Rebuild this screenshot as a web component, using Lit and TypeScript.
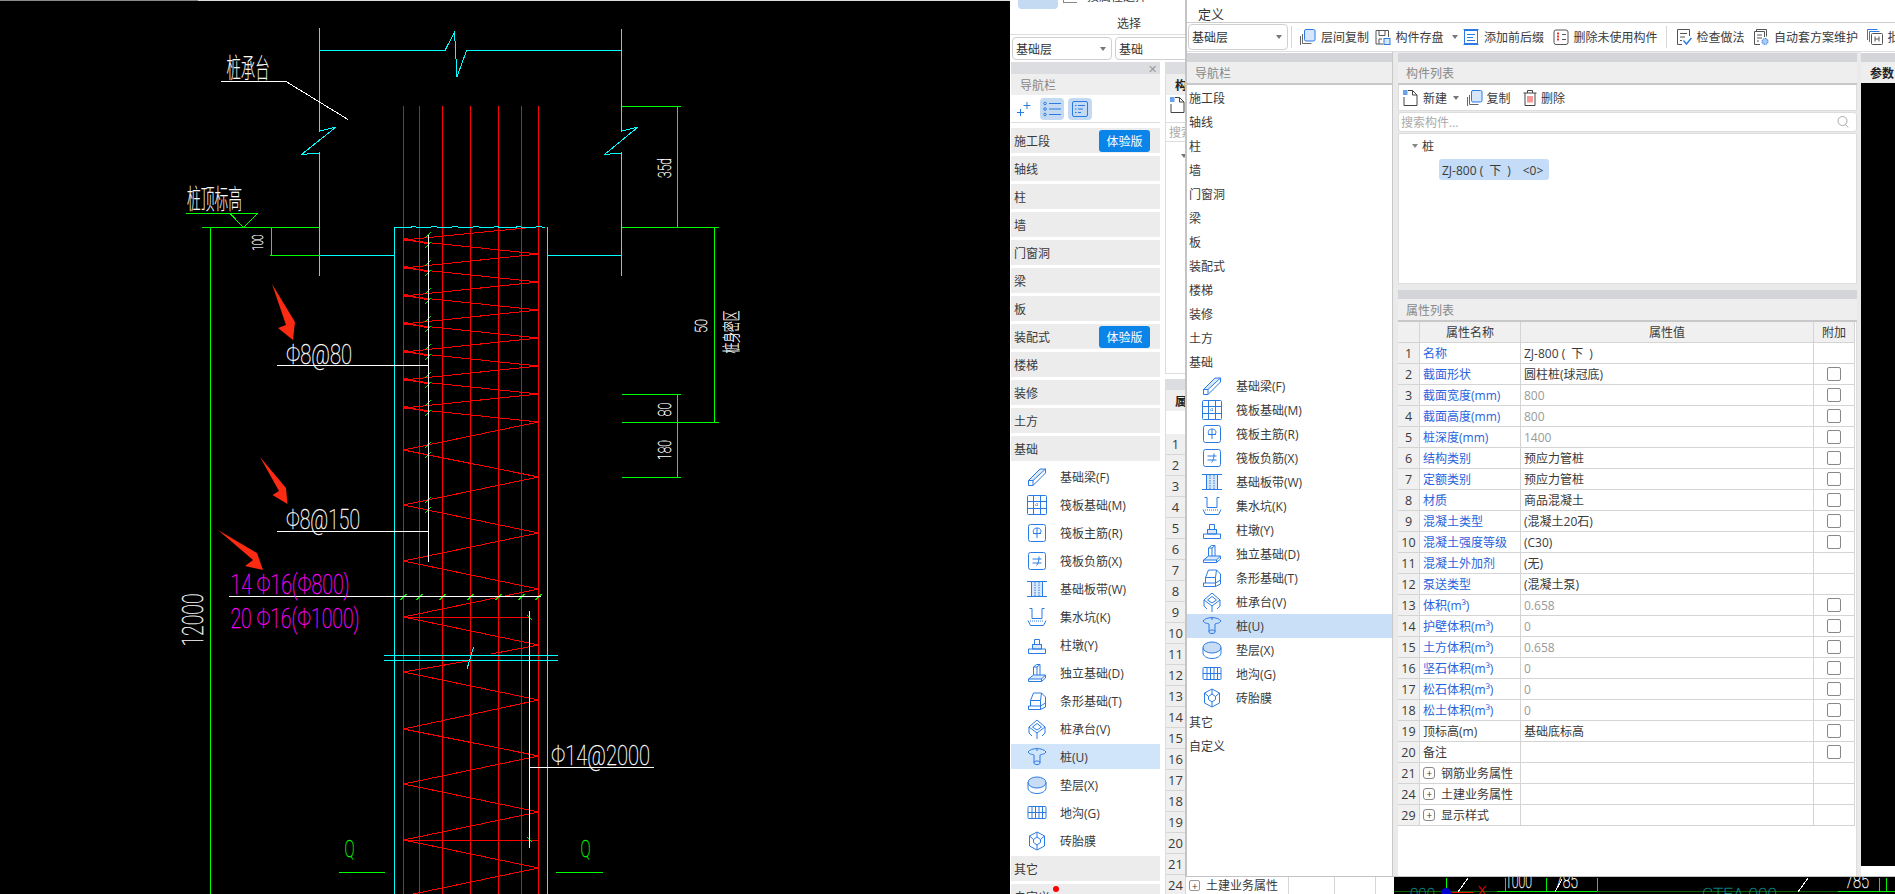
import { LitElement, css, html, svg } from 'lit';
import { customElement } from 'lit/decorators.js';

const BLUE = '#2a7be4';

const base = css`
:host {
    font: 12px "Open Sans", "Noto Sans CJK SC", sans-serif;
    color: #3a3a3a;
}

svg {
    display: block;
    flex: none;
}

.ico {
    fill: none;
    stroke: #2a7be4;
    stroke-width: 1;
}

.strip {
    flex: none;
    height: 9px;
    margin-top: 1px;
    background: #d4d5d9;
}

.head {
    flex: none;
    height: 21px;
    display: flex;
    align-items: center;
    padding-left: 9px;
    background: #eeeeee;
    color: #888;
    border-bottom: 2px solid #c8c8c8;
}

.caret {
    flex: none;
    width: 0;
    height: 0;
    border-left: 3px solid transparent;
    border-right: 3px solid transparent;
    border-top: 4px solid #777;
}

.select {
    flex: none;
    display: flex;
    align-items: center;
    justify-content: space-between;
    box-sizing: border-box;
    padding: 0 5px 0 3px;
    background: #fff;
    border: 1px solid #d0d0d0;
    border-radius: 4px;
    color: #333;
}
`;

// drawn 20x20, blue line icons for the sub rows of the navigation list
const icons: Record<string, unknown> = {
    beam: svg`<path fill="#d9e8fb" d="M1.500 13.500L13 2h5.500L6 13.500z"/><path d="M1.500 13.500h4.500v5h-4.500zM6 18.500L18.500 6V2"/>`,
    raft: svg`<rect x=".5" y=".5" width="19" height="19" rx="1"/><path d="M6.500 .5v19M13.500 .5v19M.5 6.500h19M.5 13.500h19"/><path stroke-dasharray="1 1" d="M8 10h4M10 8v4"/>`,
    main: svg`<rect x="1.500" y="1.500" width="17" height="17" rx="2"/><path d="M10 5v10M6 10.500h8M10 10.500c-5 1.500-5-5.500 0-5.500s5 5.500 1.500 5.500"/>`,
    neg: svg`<rect x="1.500" y="1.500" width="17" height="17" rx="2"/><path d="M5.500 8h9M5.500 12h9M12 5.500c0 4-.5 7-2.500 9"/>`,
    band: svg`<rect x="5" y="3" width="10" height="14" fill="#d9e8fb" stroke="none"/><path d="M0 2.500h20M0 17.500h20M4.500 2.500v15M15.500 2.500v15"/><path stroke-dasharray="1.500 1" d="M8 3v14M12 3v14"/>`,
    pit: svg`<path d="M2.500 1.500h2.500v10h10v-10h2.500"/><path stroke-dasharray="1 1" d="M3 14h14"/><path d="M1 13.500l2.500 5h13l2.500-5"/>`,
    pier: svg`<path fill="#d9e8fb" d="M5.500 14V9.500h9V14z"/><path d="M1.500 18.500V14h17v4.500zM5.500 14V9.500h9V14M7.500 9.500V4.500h5v5"/>`,
    iso: svg`<path fill="#d9e8fb" d="M1.500 16l5-4h12l-4 4z"/><path d="M1.500 16v2.500h13l4-3.500v-3M14.500 16v2.500M6.500 12V4l3-2.500h3.500V12M6.500 4h3.500l3-2.500M10 4v8"/>`,
    strip: svg`<path d="M1.500 18.500V15h12v3.500zM3.500 15V9.500h10V15M3.500 9.500l3-7.500h8l-1 7.500M13.500 15l5-3v4l-5 2.500M14.500 2l4 4v6"/>`,
    cap: svg`<path d="M10 1l8 7v6M10 1L2 8v6M2 8l8 6 8-6M10 14v6M2 14l3 3M18 14l-3 3M10 4.500l4.500 3.500-4.500 3-4.500-3z"/>`,
    pile: svg`<path d="M1 5c3-4.500 15-4.500 18 0-2 3-5 2-6 3v8c0 2-6 2-6 0V8C6 7 3 8 1 5zM7 15.500c0-2 6-2 6 0M10 1v3"/>`,
    cushion: svg`<ellipse cx="10" cy="7.500" rx="9" ry="5.500" fill="#c8dcf5"/><path d="M1 7.500v5.500c0 3 4 5.500 9 5.500s9-2.500 9-5.500V7.500"/>`,
    trench: svg`<rect x="1" y="3.500" width="18" height="12" rx="1"/><path d="M1 9.500h18M5 3.500v12M8.500 3.500v12M12 3.500v12M15.500 3.500v12"/>`,
    film: svg`<path d="M10 1l7.500 4v10L10 19l-7.500-4V5zM10 6l3.500 2.500v3L10 14l-3.500-2.500v-3zM10 1v5M17.500 5l-4 3.500M2.500 5l4 3.500M10 14v5"/>`,
};

const navGroups = [
    '施工段', '轴线', '柱', '墙', '门窗洞', '梁', '板', '装配式', '楼梯', '装修', '土方', '基础',
];

const navSubs = [
    ['beam', '基础梁(F)'],
    ['raft', '筏板基础(M)'],
    ['main', '筏板主筋(R)'],
    ['neg', '筏板负筋(X)'],
    ['band', '基础板带(W)'],
    ['pit', '集水坑(K)'],
    ['pier', '柱墩(Y)'],
    ['iso', '独立基础(D)'],
    ['strip', '条形基础(T)'],
    ['cap', '桩承台(V)'],
    ['pile', '桩(U)'],
    ['cushion', '垫层(X)'],
    ['trench', '地沟(G)'],
    ['film', '砖胎膜'],
];

function navIcon(name: string) {
    return html`<svg class="ico" width="20" height="20" viewBox="0 0 20 20">${icons[name]}</svg>`;
}

// 16x16 icons of the toolbars
const tb = {
    copy: svg`<path stroke="#666" fill="none" d="M2.500 5v9.500h9M.5 7v9"/><rect x="4.500" y=".5" width="10.500" height="11.500" rx="1.500" fill="#d6e6fb" stroke="${BLUE}"/>`,
    save: svg`<path stroke="#555" fill="none" d="M1 15V1.500h12.500V8M4 1.500v5h6v-5M4 15v-5h3M1 15h7"/><rect x="9" y="9.500" width="6" height="6" fill="#d6e6fb" stroke="${BLUE}"/>`,
    prefix: svg`<rect x="1.500" y="1.500" width="13" height="13" fill="none" stroke="${BLUE}"/><path stroke="${BLUE}" d="M.5 .5h15M.5 15.500h15M4 5.500h8M4 8.500h6M4 11.500h8"/>`,
    unused: svg`<rect x="1" y="1" width="14" height="14.500" rx="2" fill="none" stroke="#555"/><path stroke="#e33" stroke-width="2" stroke-dasharray="2 1" d="M5 3.500v9"/><path stroke="#555" d="M9 5.500h4M9 10.500h4"/>`,
    check: svg`<path stroke="#555" fill="none" d="M6 15.500H1.500V.5h12V7M4 4.500h7M4 8h5M4 11.500h2"/><path stroke="${BLUE}" stroke-width="1.500" fill="none" d="M7.500 11.500l3 3.500 5-6"/>`,
    auto: svg`<path stroke="#555" fill="none" d="M7 15.500H1.500V2.500h10V8M3.500 2.500V.5h10v7M4 6h5M4 9h5M4 12h2"/><circle cx="12" cy="12.500" r="3" fill="#a8c8f5" stroke="${BLUE}" stroke-dasharray="1.500 .8"/>`,
    stack: svg`<path stroke="${BLUE}" fill="none" d="M.5 11V.5h10M2.500 13V2.500h10"/><rect x="4.500" y="4.500" width="11" height="11" rx="1" fill="#fff" stroke="#555"/><path stroke="#555" d="M8 7.500v5M12 7.500v5M8 10h4"/>`,
    newDoc: svg`<path stroke="#444" fill="none" d="M1 7v8.500h13V5L9.500 .5H5M9.500 .5V5H14"/><rect x="0" y="0" width="4.500" height="5" fill="${BLUE}" opacity=".7"/>`,
    trash: svg`<path stroke="#444" fill="none" d="M.5 3h13M4.500 3V.5h5V3M2 3v12.500h10V3"/><path stroke="#e33" d="M5 6v6.500M7 6v6.500M9 6v6.500"/>`,
};

function tool(icon: unknown, label: string, caret = false) {
    return html`<div class="tool">
        <svg width="16" height="16" viewBox="0 0 16 16">${icon}</svg><span>${label}</span>
        ${caret ? html`<i class="caret after"></i>` : ''}
    </div>`;
}

@customElement('cad-drawing')
export class CadDrawing extends LitElement
{
    static styles = css`
:host {
    position: absolute;
    left: 0;
    top: 0;
    width: 1895px;
    height: 894px;
    background: #000;
}

svg {
    display: block;
}

path {
    fill: none;
    stroke-width: 1;
    shape-rendering: crispEdges;
}

text {
    font-family: Roboto, "Noto Sans CJK SC", sans-serif;
    font-weight: 100;
    stroke-width: .35;
}
`;

    private label(t: string, x: number, y: number, w: number, size: number, fill = '#fff')
    {
        return svg`<text x=${x} y=${y} font-size=${size} fill=${fill} stroke=${fill} textLength=${w} lengthAdjust="spacingAndGlyphs">${t}</text>`;
    }

    private turned(t: string, cx: number, cy: number, len: number, size: number)
    {
        return svg`<text transform="translate(${cx} ${cy}) rotate(-90)" x=${-len / 2} y="0" font-size=${size} fill="#fff" stroke="#fff" textLength=${len} lengthAdjust="spacingAndGlyphs">${t}</text>`;
    }

    protected render(): unknown
    {
        const rebars = [403.5, 419.5, 442.5, 470.5, 498.5, 521.5, 538.5];

        // spiral stirrup, alternating between the outer bars
        const leftY = [240, 268, 296, 324, 352, 380, 408, 450, 505, 561, 617, 672, 729, 784, 840, 896];
        const rightY = [254, 282, 310, 338, 366, 394, 422, 477, 533, 589, 645, 700, 756, 812, 868];
        let zig = 'M525 228L403.500 240';
        leftY.forEach((y, i) => {
            if (rightY[i] === undefined) return;
            zig += `L538.500 ${rightY[i]}`;
            if (rightY[i] === 645) {
                zig += `L491 654M468 661`;
            }
            zig += `L403.500 ${leftY[i + 1]}`;
        });
        // the short return legs at the column edge
        const legs = leftY.slice(0, 7).map(y => `M403.500 ${y - 2}L428 ${y + 4}`).join('');

        let jag = 'M395 227';
        for (let x = 398; x < 548; x += 3) {
            jag += `L${x} ${x % 7 === 0 ? 226 : x % 5 === 0 ? 228 : 227}`;
        }

        const ticks = leftY.slice(0, 9).flatMap(y => [y - 5, y + 5])
            .map(y => `M425 ${y + 3}l6 -6`).join('')
            + rebars.map(x => `M${x - 3} 600l6 -6`).join('')
            + 'M527 615l5 5M527 837l5 5';

        const stubs = [206, 271.5, 677.5, 714.5].map(x => `M${x - 4} 227.500h8`).join('');

        return html`<svg width="1895" height="894" viewBox="0 0 1895 894">
            <path stroke="#888" d="M0 .5h198"/>
            <path stroke="#ddd" d="M198 .5h812"/>

            <path stroke="#ff0000" d=${rebars.map(x => `M${x} 106V894`).join('')}/>
            <path stroke="#ff0000" stroke-width="2" d="M403.500 106V894"/>
            <path stroke="#ff0000" d=${zig + legs + 'M404 617.500H529'}/>
            <path stroke="#ff0000" stroke-width="2" d="M404 840H538"/>

            <path stroke="#00ffff" d="M319.500 28V131L336 127L301.500 154.500L319.500 153V275.500
                M319.500 50.500H445L454.500 32L457 77L466.500 50.500H621.500
                M621.500 29V131L638 127L604.500 154.500L621.500 153V275.500
                M394.500 227V894M547.500 227V894
                M319.500 255.500H394.500M547.500 255.500H621.500
                M384 655.500H558M384 660.500H558M473.500 647L467 669"/>
            <path stroke="#00ffff" d=${jag}/>

            <path stroke="#00ff00" d="M206 227.500H319.500M621.500 227.500H719
                M210.500 227.500V894
                M271.500 227.500V255.500M270 255.500H319.500
                M185.500 213.500H257.500M230 213.500L243.500 227.500L257.500 213.500
                M621.500 106.500H681M677.500 106.500V227.500
                M714.500 227.500V422.500M621.500 394.500H681M621.500 422.500H719
                M677.500 394.500V477.500M621.500 477.500H681
                M339 872.500H385M556 872.500H603"/>
            <path stroke="#00ee00" d=${ticks + stubs}/>

            <path stroke="#fff" d="M221 81.500H286L348 119.500
                M277 365.500H428.500M428.500 235V561.500
                M277 531.500H428.500
                M229 596.500H541
                M529.500 611V847.500M529.500 767.500H654"/>

            ${this.label('桩承台', 226.500, 78, 43, 27)}
            ${this.label('桩顶标高', 187, 209, 55, 27)}
            ${this.turned('100', 263, 242.700, 16, 15)}
            ${this.turned('35d', 670.500, 168, 20, 18)}
            ${this.turned('50', 707, 326, 14, 17)}
            ${this.turned('桩身密区', 738, 332, 43, 18)}
            ${this.turned('80', 670.500, 409.500, 14, 18)}
            ${this.turned('180', 670.500, 450, 20, 18)}
            ${this.label('Φ8@80', 286, 364, 66, 28)}
            ${this.label('Φ8@150', 286, 529, 74, 28)}
            ${this.label('14 Φ16(Φ800)', 230.500, 594, 119, 28, '#ff00ff')}
            ${this.label('20 Φ16(Φ1000)', 230.500, 628, 129, 28, '#ff00ff')}
            ${this.label('Φ14@2000', 551, 765, 99, 28)}
            ${this.turned('12000', 203, 620, 53, 30)}
            ${this.label('Q', 344.500, 857, 10, 24, '#00ff00')}
            ${this.label('Q', 580.500, 857, 10, 24, '#00ff00')}

            <path style="stroke:none;fill:#fb2a12;shape-rendering:auto" d="M272 284L295 322L293 340L278 328L286 325z"/>
            <path style="stroke:none;fill:#fb2a12;shape-rendering:auto" d="M260 457L286 488L287.500 504L272.500 495L279 491z"/>
            <path style="stroke:none;fill:#fb2a12;shape-rendering:auto" d="M218 530L257 553L263 570L245 566L253 560z"/>

            <path stroke="#0a5f0a" d="M1394 891.500H1895"/>
            <path stroke="#00ee00" d="M1497 891.500H1597M1838 891.500H1895M1505 878V891M1546.500 878V891M1597 878V891M1879 878V891M1886 878V891"/>
            <path stroke="#00ff00" stroke-width="4" d="M1446 878V888"/>
            <circle cx="1446" cy="893" r="5" fill="#0000d0"/>
            <path stroke="#f00" stroke-width="2" d="M1452 892H1473"/>
            <path stroke="#fff" d="M1458 892L1468 878M1798 892L1808 878M1555 892L1562 879"/>
            ${this.label('000', 1410, 900, 25, 16, '#0a7f7f')}
            ${this.label('CTEA-000', 1702, 900, 75, 16, '#0a7f7f')}
            ${this.label('X', 1478, 895, 8, 12, '#f00')}
            ${this.label('1000', 1505, 888, 27, 20)}
            ${this.label('785', 1555, 888, 23, 20)}
            ${this.label('785', 1845, 888, 24, 20)}
        </svg>`;
    }
}

@customElement('back-window')
export class BackWindow extends LitElement
{
    static styles = [base, css`
:host {
    position: absolute;
    left: 1010px;
    top: 0;
    width: 384px;
    height: 894px;
    display: flex;
    flex-direction: column;
    background: #fff;
    overflow: hidden;
}

.ribbon {
    flex: none;
    height: 35px;
    box-sizing: border-box;
    border-bottom: 1px solid #ddd;
}

.ribbon-top {
    height: 9px;
    display: flex;
    gap: 5px;
    padding-left: 8px;
    overflow: hidden;
}

.tile-on {
    width: 40px;
    height: 9px;
    background: #c4daf3;
    border-radius: 0 0 4px 4px;
}

.mini {
    width: 14px;
    height: 3px;
    border: solid #888;
    border-width: 0 0 1px 1px;
    box-sizing: border-box;
}

.ribbon-top span {
    margin: -13px 0 0 5px;
}

.ribbon-name {
    padding: 5px 0 0 107px;
}

.selects {
    flex: none;
    height: 27px;
    display: flex;
    gap: 3px;
    padding: 2px 0 0 2px;
    box-sizing: border-box;
}

.selects .select {
    width: 100px;
    height: 23px;
}

.body {
    flex: 1;
    display: flex;
    gap: 5px;
    min-height: 0;
    padding-left: 1px;
}

.nav {
    width: 149px;
    display: flex;
    flex-direction: column;
}

.title {
    flex: none;
    height: 12px;
    display: flex;
    align-items: center;
    justify-content: flex-end;
    padding-right: 3px;
    background: #dcdde0;
    color: #999;
    font-size: 11px;
}

.nav .head {
    height: 21px;
    border-bottom: 0;
}

.tools {
    flex: none;
    height: 28px;
    box-sizing: border-box;
    display: flex;
    align-items: center;
    padding-left: 1px;
    gap: 4px;
    border-bottom: 1px solid #ddd;
}

.tile {
    width: 24px;
    height: 22px;
    display: grid;
    place-items: center;
    border-radius: 4px;
}

.tile.on {
    background: #c4daf3;
}

.rows {
    display: flex;
    flex-direction: column;
    gap: 3px;
    padding-top: 5px;
}

.row {
    flex: none;
    height: 25px;
    display: flex;
    align-items: center;
}

.group {
    justify-content: space-between;
    padding: 0 10px 0 3px;
    background: #ececec;
}

.sub {
    gap: 13px;
    padding-left: 16px;
}

.sub.on {
    background: #d0e4fa;
}

.badge {
    width: 51px;
    height: 22px;
    display: grid;
    place-items: center;
    background: #0a84e8;
    color: #fff;
    border-radius: 3px;
}

.dot-name {
    position: relative;
}

.dot {
    position: absolute;
    left: 39px;
    top: -2px;
    width: 6px;
    height: 6px;
    border-radius: 50%;
    background: #f00;
}

.side {
    flex: 1;
    display: flex;
    flex-direction: column;
    min-width: 0;
}

.tab {
    flex: none;
    height: 21px;
    width: 19px;
    display: flex;
    align-items: center;
    padding-left: 9px;
    background: #eee;
    color: #222;
    font-weight: 700;
}

.side-top {
    flex: none;
    height: 300px;
    box-sizing: border-box;
    border-bottom: 1px solid #ddd;
    border-left: 1px solid #ddd;
}

.side-bar {
    height: 28px;
    padding: 2px 0 0 4px;
    box-sizing: border-box;
    border-bottom: 1px solid #ddd;
}

.side-find {
    height: 18px;
    padding-left: 3px;
    color: #aaa;
    border-bottom: 1px solid #ddd;
}

.side-tree {
    padding: 16px 0 0 15px;
}

.spacer {
    flex: none;
    height: 5px;
}

.side-props {
    flex: 1;
    display: flex;
    flex-direction: column;
    border-left: 1px solid #ddd;
}

.side-props .gap {
    flex: none;
    height: 23px;
}

.side-props .title {
    height: 11px;
}

.grid-row {
    flex: none;
    height: 21px;
    box-sizing: border-box;
    display: grid;
    grid-template-columns: 20px 103px 46px 41px 19px;
    border-bottom: 1px solid #d6d6d6;
}

.grid-row > div {
    display: flex;
    align-items: center;
    gap: 6px;
    border-right: 1px solid #d6d6d6;
    padding-left: 3px;
}

.grid-row .num {
    justify-content: center;
    padding: 0;
    background: #efefef;
    font-size: 13px;
}

.plus {
    flex: none;
    width: 11px;
    height: 11px;
    box-sizing: border-box;
    display: grid;
    place-items: center;
    border: 1px solid #999;
    border-radius: 2px;
    line-height: 1;
    font-size: 10px;
}
`];

    protected render(): unknown
    {
        const nums = [...Array(21).keys()].map(i => i + 1).concat([24]);
        return html`
<div class="ribbon">
    <div class="ribbon-top"><i class="tile-on"></i><i class="mini"></i><span>按属性选择</span></div>
    <div class="ribbon-name">选择</div>
</div>
<div class="selects">
    <div class="select">基础层<i class="caret"></i></div>
    <div class="select">基础<i class="caret"></i></div>
</div>
<div class="body">
    <div class="nav">
        <div class="title">✕</div>
        <div class="head">导航栏</div>
        <div class="tools">
            <span class="tile"><svg width="14" height="14" viewBox="0 0 14 14" fill="none" stroke=${BLUE}><path d="M10 0v7M6.500 3.500h7M3.500 7v7M0 10.500h7"/></svg></span>
            <span class="tile on"><svg width="18" height="16" viewBox="0 0 18 16" fill="none" stroke=${BLUE}><path d="M6 2.500h12M6 8h12M6 13.500h12"/><circle cx="2" cy="2.500" r="1.300"/><circle cx="2" cy="8" r="1.300"/><circle cx="2" cy="13.500" r="1.300"/></svg></span>
            <span class="tile on"><svg width="16" height="16" viewBox="0 0 16 16" fill="none" stroke=${BLUE}><rect x=".5" y=".5" width="15" height="15" rx="1.500"/><path d="M3 4.500h1.500M6 4.500h7M3 8h1.500M6 8h5M3 11.500h1.500M6 11.500h3"/></svg></span>
        </div>
        <div class="rows">
            ${navGroups.map(name => html`<div class="row group">${name}${name === '施工段' || name === '装配式' ? html`<span class="badge">体验版</span>` : ''}</div>`)}
            ${navSubs.map(([icon, name]) => html`<div class="row sub ${icon === 'pile' ? 'on' : ''}">${navIcon(icon)}<span>${name}</span></div>`)}
            <div class="row group">其它</div>
            <div class="row group"><span class="dot-name">自定义<i class="dot"></i></span></div>
        </div>
    </div>
    <div class="side">
        <div class="title"></div>
        <div class="side-top">
            <div class="tab">构</div>
            <div class="side-bar"><svg width="16" height="16" viewBox="0 0 16 16">${tb.newDoc}</svg></div>
            <div class="side-find">搜索构件</div>
            <div class="side-tree"><i class="caret"></i></div>
        </div>
        <div class="spacer"></div>
        <div class="side-props">
            <div class="title"></div>
            <div class="tab">属</div>
            <div class="gap"></div>
            ${nums.map(n => html`<div class="grid-row">
                <div class="num">${n}</div>
                <div>${n === 24 ? html`<i class="plus">+</i><span>土建业务属性</span>` : ''}</div>
                <div></div><div></div><div></div>
            </div>`)}
        </div>
    </div>
</div>`;
    }
}

const props: [number, string, string, boolean, boolean, boolean][] = [
    // number, name, value, blue name, grey value, has checkbox
    [1, '名称', 'ZJ-800 (\u2002下\u2002)', true, false, false],
    [2, '截面形状', '圆柱桩(球冠底)', true, false, true],
    [3, '截面宽度(mm)', '800', true, true, true],
    [4, '截面高度(mm)', '800', true, true, true],
    [5, '桩深度(mm)', '1400', true, true, true],
    [6, '结构类别', '预应力管桩', true, false, true],
    [7, '定额类别', '预应力管桩', true, false, true],
    [8, '材质', '商品混凝土', true, false, true],
    [9, '混凝土类型', '(混凝土20石)', true, false, true],
    [10, '混凝土强度等级', '(C30)', true, false, true],
    [11, '混凝土外加剂', '(无)', true, false, false],
    [12, '泵送类型', '(混凝土泵)', true, false, false],
    [13, '体积(m³)', '0.658', true, true, true],
    [14, '护壁体积(m³)', '0', true, true, true],
    [15, '土方体积(m³)', '0.658', true, true, true],
    [16, '坚石体积(m³)', '0', true, true, true],
    [17, '松石体积(m³)', '0', true, true, true],
    [18, '松土体积(m³)', '0', true, true, true],
    [19, '顶标高(m)', '基础底标高', false, false, true],
    [20, '备注', '', false, false, true],
];

const propGroups: [number, string][] = [
    [21, '钢筋业务属性'],
    [24, '土建业务属性'],
    [29, '显示样式'],
];

@customElement('front-window')
export class FrontWindow extends LitElement
{
    static styles = [base, css`
:host {
    position: absolute;
    left: 1185px;
    top: 0;
    width: 710px;
    height: 877px;
    box-sizing: border-box;
    display: flex;
    flex-direction: column;
    background: #fff;
    border-left: 2px solid #c4c4c4;
    border-bottom: 1px solid #c4c4c4;
    overflow: hidden;
}

.menu {
    flex: none;
    height: 23px;
    box-sizing: border-box;
    display: flex;
    align-items: center;
    padding: 4px 0 0 11px;
    border-bottom: 1px solid #ccc;
    color: #333;
    font-size: 13px;
}

.toolbar {
    flex: none;
    height: 28px;
    display: flex;
    align-items: center;
    gap: 8.500px;
    padding-left: 1px;
    white-space: nowrap;
}

.toolbar .select {
    width: 100px;
    height: 26px;
    margin-right: -6px;
}

.sep {
    flex: none;
    width: 1px;
    height: 22px;
    background: #d8d8d8;
}

.tool {
    flex: none;
    display: flex;
    align-items: center;
    gap: 5px;
}

.select + .sep + .tool {
    margin-right: -3px;
}

.after {
    margin: 0 -3px 0 3px;
}

.panels {
    flex: 1;
    display: flex;
    min-height: 0;
    border-top: 1px solid #ddd;
    background: #eaeaea;
}

.panel {
    flex: none;
    display: flex;
    flex-direction: column;
    background: #fff;
}

.nav {
    width: 205px;
    border-right: 1px solid #c8c8c8;
}

.nav .head {
    padding-left: 8px;
}

.rows {
    display: flex;
    flex-direction: column;
    padding-top: 1px;
}

.row {
    flex: none;
    height: 24px;
    display: flex;
    align-items: center;
    padding-left: 2px;
}

.sub {
    gap: 14px;
    padding-left: 15px;
}

.sub.on {
    background: #c9dff7;
}

.middle {
    width: 459px;
    margin-left: 5px;
    background: #eaeaea;
}

.middle .head {
    padding-left: 8px;
}

.block {
    background: #fff;
    border: solid #ddd;
    border-width: 0 1px;
}

.bar {
    flex: none;
    height: 24px;
    display: flex;
    align-items: center;
    padding: 1px 0 0 4px;
    gap: 4px;
    border-bottom: 1px solid #ddd;
}

.bar .caret {
    margin: 0 3.500px 0 2px;
}

.bar svg + span + svg {
    margin-left: 8.500px;
}

.find {
    flex: none;
    height: 18px;
    margin-top: 1px;
    display: flex;
    align-items: center;
    justify-content: space-between;
    padding: 0 7px 0 2px;
    color: #aaa;
    background: #fff;
    border: 1px solid #ddd;
    border-radius: 3px;
}

.tree {
    flex: none;
    height: 151px;
    box-sizing: border-box;
    margin-top: 1px;
    padding: 3px 0 0 13px;
    border: 1px solid #ddd;
    background: #fff;
}

.node {
    height: 18px;
    display: flex;
    align-items: center;
    gap: 4px;
}

.node .caret {
    border-top-color: #888;
}

.leaf {
    width: 110px;
    height: 21px;
    box-sizing: border-box;
    display: flex;
    align-items: center;
    margin: 4px 0 0 27px;
    padding-left: 3px;
    background: #c4dcf7;
    border-radius: 3px;
    white-space: pre;
}

.props-gap {
    flex: none;
    height: 5px;
}

.table-wrap {
    flex: 1;
    background: #fff;
    border-right: 1px solid #ddd;
}

.table {
    display: grid;
    grid-template-columns: 22px 101px 293px 41px;
    grid-auto-rows: 21px;
}

.cell {
    display: flex;
    align-items: center;
    padding-left: 3px;
    box-sizing: border-box;
    border: solid #d4d4d4;
    border-width: 0 1px 1px 0;
    white-space: nowrap;
}

.cell.num {
    justify-content: center;
    padding: 0;
    background: #f0f0f0;
    font-size: 12.500px;
}

.cell.th {
    justify-content: center;
    padding: 0;
    background: #f0f0f0;
}

.cell.blue {
    color: #2a63dc;
}

.cell.grey {
    color: #999;
}

.cell.mid {
    justify-content: center;
    padding: 0;
}

.check {
    width: 14px;
    height: 14px;
    box-sizing: border-box;
    border: 1px solid #888;
    border-radius: 2px;
}

.plus {
    flex: none;
    width: 12px;
    height: 12px;
    margin-right: 6px;
    box-sizing: border-box;
    display: grid;
    place-items: center;
    border: 1px solid #888;
    border-radius: 3px;
    line-height: 1;
    font-size: 10px;
}

.params {
    width: 34px;
    margin-left: 4px;
}

.params .head {
    color: #222;
    font-weight: 700;
    padding-left: 9px;
    white-space: nowrap;
    overflow: hidden;
    border-bottom: 0;
}

.black {
    flex: none;
    height: 783px;
    background: #000;
}
`];

    protected render(): unknown
    {
        return html`
<div class="menu">定义</div>
<div class="toolbar">
    <div class="select">基础层<i class="caret"></i></div>
    <i class="sep"></i>
    ${tool(tb.copy, '层间复制')}
    ${tool(tb.save, '构件存盘', true)}
    ${tool(tb.prefix, '添加前后缀')}
    ${tool(tb.unused, '删除未使用构件')}
    <i class="sep"></i>
    ${tool(tb.check, '检查做法')}
    ${tool(tb.auto, '自动套方案维护')}
    ${tool(tb.stack, '批量')}
</div>
<div class="panels">
    <div class="panel nav">
        <div class="strip"></div>
        <div class="head">导航栏</div>
        <div class="rows">
            ${navGroups.map(name => html`<div class="row">${name}</div>`)}
            ${navSubs.map(([icon, name]) => html`<div class="row sub ${icon === 'pile' ? 'on' : ''}">${navIcon(icon)}<span>${name}</span></div>`)}
            <div class="row">其它</div>
            <div class="row">自定义</div>
        </div>
    </div>
    <div class="panel middle">
        <div class="strip"></div>
        <div class="head">构件列表</div>
        <div class="bar block">
            <svg width="16" height="16" viewBox="0 0 16 16">${tb.newDoc}</svg><span>新建</span><i class="caret"></i>
            <svg width="16" height="16" viewBox="0 0 16 16">${tb.copy}</svg><span>复制</span>
            <svg width="14" height="16" viewBox="0 0 14 16">${tb.trash}</svg><span>删除</span>
        </div>
        <div class="find">搜索构件...
            <svg width="12" height="12" viewBox="0 0 12 12" fill="none" stroke="#aaa"><circle cx="5.500" cy="5" r="4.500"/><path d="M8.500 8.500l2.500 3"/></svg>
        </div>
        <div class="tree">
            <div class="node"><i class="caret"></i>桩</div>
            <div class="leaf">ZJ-800 (\u2002下\u2002)\u2003&lt;0&gt;</div>
        </div>
        <div class="props-gap"></div>
        <div class="strip"></div>
        <div class="head">属性列表</div>
        <div class="table-wrap">
            <div class="table">
                <div class="cell th"></div>
                <div class="cell th">属性名称</div>
                <div class="cell th">属性值</div>
                <div class="cell th">附加</div>
                ${props.map(([n, name, value, blue, grey, check]) => html`
                    <div class="cell num">${n}</div>
                    <div class="cell ${blue ? 'blue' : ''}">${name}</div>
                    <div class="cell ${grey ? 'grey' : ''}">${value}</div>
                    <div class="cell mid">${check ? html`<i class="check"></i>` : ''}</div>
                `)}
                ${propGroups.map(([n, name]) => html`
                    <div class="cell num">${n}</div>
                    <div class="cell"><i class="plus">+</i>${name}</div>
                    <div class="cell"></div>
                    <div class="cell"></div>
                `)}
            </div>
        </div>
    </div>
    <div class="panel params">
        <div class="strip"></div>
        <div class="head">参数</div>
        <div class="black"></div>
    </div>
</div>`;
    }
}

@customElement('app-root')
export class AppRoot extends LitElement
{
    static styles = css`
:host {
    display: block;
    position: relative;
    width: 1895px;
    height: 894px;
    overflow: hidden;
    background: #000;
}
`;

    protected render(): unknown
    {
        return html`
<cad-drawing></cad-drawing>
<back-window></back-window>
<front-window></front-window>`;
    }
}
